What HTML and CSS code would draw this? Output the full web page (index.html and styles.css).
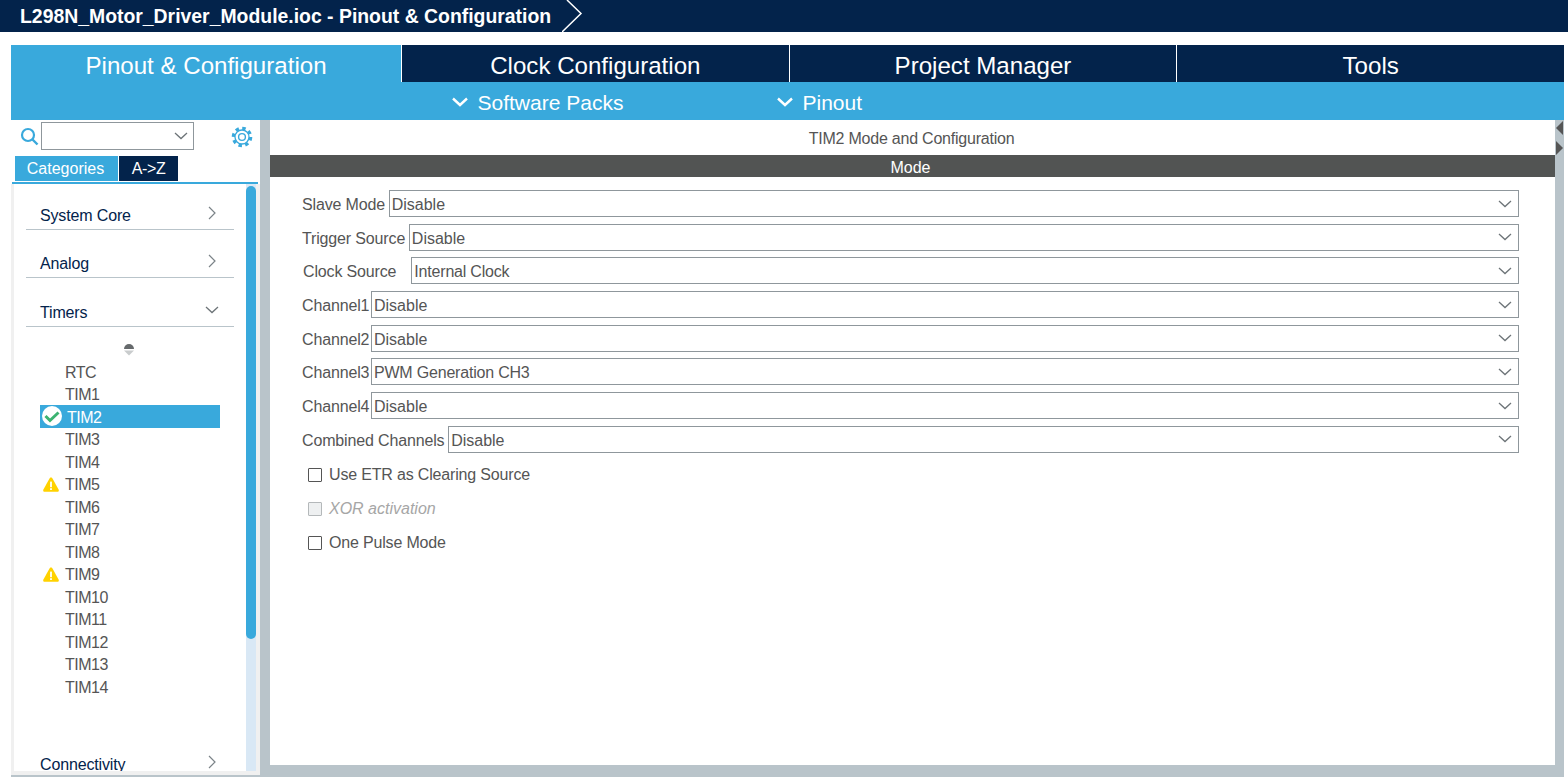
FILE: index.html
```html
<!DOCTYPE html>
<html>
<head>
    <title>L298N_Motor_Driver_Module.ioc - Pinout &amp; Configuration</title>
    <link rel="stylesheet" href="styles.css">
</head>
<body>
    <svg class="defs" width="0" height="0">
        <symbol id="chev-down" viewBox="0 0 14 8"><path d="M1 1 L7 6.5 L13 1" fill="none" stroke="#6d7478" stroke-width="1.3"/></symbol>
        <symbol id="chev-right" viewBox="0 0 8 14"><path d="M1 1 L7 7 L1 13" fill="none" stroke="#7b8388" stroke-width="1.2"/></symbol>
        <symbol id="warn" viewBox="0 0 16 15"><path d="M8 0.5 C8.8 0.5 9.2 1 9.6 1.7 L15.6 12.6 C16.2 13.8 15.6 14.8 14.3 14.8 L1.7 14.8 C0.4 14.8 -0.2 13.8 0.4 12.6 L6.4 1.7 C6.8 1 7.2 0.5 8 0.5 Z" fill="#ffd200"/><rect x="7.1" y="4.6" width="1.8" height="5.6" fill="#fff"/><rect x="7.1" y="11.2" width="1.8" height="1.8" fill="#fff"/></symbol>
    </svg>

    <div class="titlebar">
        <span class="title-text">L298N_Motor_Driver_Module.ioc - Pinout &amp; Configuration</span>
        <svg class="title-arrow" width="22" height="32" viewBox="0 0 22 32"><path d="M5 0 L19 13.5 L0 32" fill="none" stroke="#fff" stroke-width="1.5"/></svg>
    </div>

    <div class="tabs">
        <div class="tab active">Pinout &amp; Configuration</div>
        <div class="tab">Clock Configuration</div>
        <div class="tab">Project Manager</div>
        <div class="tab">Tools</div>
    </div>

    <div class="subbar">
        <div class="subitem subitem-packs">
            <svg width="16" height="10" viewBox="0 0 16 10"><path d="M1 1.5 L8 8 L15 1.5" fill="none" stroke="#fff" stroke-width="2.4"/></svg>
            <span>Software Packs</span>
        </div>
        <div class="subitem">
            <svg width="16" height="10" viewBox="0 0 16 10"><path d="M1 1.5 L8 8 L15 1.5" fill="none" stroke="#fff" stroke-width="2.4"/></svg>
            <span>Pinout</span>
        </div>
    </div>

    <div class="workspace">
        <div class="sidebar">
            <div class="side-head">
                <div class="search-row">
                    <svg class="search-icon" width="19" height="19" viewBox="0 0 19 19"><circle cx="8" cy="8" r="6" fill="none" stroke="#39a9dc" stroke-width="2.2"/><path d="M12.5 12.5 L17.5 17.5" stroke="#39a9dc" stroke-width="2.4"/></svg>
                    <div class="combo">
                        <svg width="14" height="8"><use href="#chev-down"/></svg>
                    </div>
                    <svg class="gear-icon" width="22" height="22" viewBox="0 0 22 22">
                        <circle cx="11" cy="11" r="8.6" fill="none" stroke="#39a9dc" stroke-width="3.4" stroke-dasharray="3.4 3.35"/>
                        <circle cx="11" cy="11" r="7" fill="#fff" stroke="#39a9dc" stroke-width="1.3"/>
                        <circle cx="11" cy="11" r="3.4" fill="none" stroke="#39a9dc" stroke-width="1.4"/>
                    </svg>
                </div>
                <div class="side-tabs">
                    <div class="side-tab on">Categories</div>
                    <div class="side-tab">A-&gt;Z</div>
                </div>
                <div class="side-line"></div>
            </div>
            <div class="side-body">
                <div class="tree">
                    <div class="cat"><span>System Core</span><svg width="8" height="14"><use href="#chev-right"/></svg></div>
                    <div class="cat"><span>Analog</span><svg width="8" height="14"><use href="#chev-right"/></svg></div>
                    <div class="cat"><span>Timers</span><svg class="cat-open" width="14" height="8"><use href="#chev-down"/></svg></div>

                    <div class="sort-icon">
                        <svg width="10" height="13" viewBox="0 0 10 13"><path d="M0 6 A5 5 0 0 1 10 6 Z" fill="#666a6c"/><path d="M0 7.5 H10 L5 12.5 Z" fill="#c9cccd"/></svg>
                    </div>

                    <div class="items">
                        <div class="item">RTC</div>
                        <div class="item">TIM1</div>
                        <div class="item selected">
                            <svg class="ok-icon" width="20" height="20" viewBox="0 0 20 20"><circle cx="10" cy="10" r="10" fill="#fff"/><path d="M3.5 10 L8 14.5 L16.5 6.5" fill="none" stroke="#3cb371" stroke-width="3"/></svg>
                            TIM2
                        </div>
                        <div class="item">TIM3</div>
                        <div class="item">TIM4</div>
                        <div class="item"><svg class="warn-icon" width="16" height="15"><use href="#warn"/></svg>TIM5</div>
                        <div class="item">TIM6</div>
                        <div class="item">TIM7</div>
                        <div class="item">TIM8</div>
                        <div class="item"><svg class="warn-icon" width="16" height="15"><use href="#warn"/></svg>TIM9</div>
                        <div class="item">TIM10</div>
                        <div class="item">TIM11</div>
                        <div class="item">TIM12</div>
                        <div class="item">TIM13</div>
                        <div class="item">TIM14</div>
                    </div>

                    <div class="cat cat-last"><span>Connectivity</span><svg width="8" height="14"><use href="#chev-right"/></svg></div>
                </div>
                <div class="scroll"><div class="thumb"></div></div>
            </div>
        </div>

        <div class="main">
            <div class="main-title">TIM2 Mode and Configuration</div>
            <div class="mode-bar">Mode</div>
            <div class="form">
                <div class="row"><label>Slave Mode</label><div class="select"><span>Disable</span><svg width="14" height="8"><use href="#chev-down"/></svg></div></div>
                <div class="row"><label>Trigger Source</label><div class="select"><span>Disable</span><svg width="14" height="8"><use href="#chev-down"/></svg></div></div>
                <div class="row"><label class="label-wide">Clock Source</label><div class="select"><span class="tight">Internal Clock</span><svg width="14" height="8"><use href="#chev-down"/></svg></div></div>
                <div class="row"><label class="label-ch">Channel1</label><div class="select"><span>Disable</span><svg width="14" height="8"><use href="#chev-down"/></svg></div></div>
                <div class="row"><label class="label-ch">Channel2</label><div class="select"><span>Disable</span><svg width="14" height="8"><use href="#chev-down"/></svg></div></div>
                <div class="row"><label class="label-ch">Channel3</label><div class="select"><span class="tight">PWM Generation CH3</span><svg width="14" height="8"><use href="#chev-down"/></svg></div></div>
                <div class="row"><label class="label-ch">Channel4</label><div class="select"><span>Disable</span><svg width="14" height="8"><use href="#chev-down"/></svg></div></div>
                <div class="row"><label>Combined Channels</label><div class="select"><span>Disable</span><svg width="14" height="8"><use href="#chev-down"/></svg></div></div>
            </div>
            <div class="checks">
                <div class="check"><span class="box"></span>Use ETR as Clearing Source</div>
                <div class="check disabled"><span class="box"></span>XOR activation</div>
                <div class="check"><span class="box"></span>One Pulse Mode</div>
            </div>
        </div>

        <div class="splitter">
            <svg width="9" height="16" viewBox="0 0 9 16"><path d="M8 0 V14 L1 7 Z" fill="#555"/></svg>
            <svg width="9" height="16" viewBox="0 0 9 16"><path d="M1 0 V14 L8 7 Z" fill="#555"/></svg>
        </div>
    </div>
</body>
</html>
```

FILE: styles.css
```css
body {
    margin: 0;
    background-color: #fff;
    font-family: "Liberation Sans", Arial, sans-serif;
    font-size: 16px;
    color: #555;
    overflow: hidden;
}

.defs {
    position: absolute;
}

.titlebar {
    height: 32px;
    background-color: #03234b;
    display: flex;
    align-items: center;
    color: #fff;
    font-weight: bold;
    font-size: 19.4px;
    padding-left: 20px;
}

.title-arrow {
    margin-left: 11px;
}

.tabs {
    display: flex;
    height: 37px;
    margin: 13px 4px 0 11px;
    background-color: #03234b;
}

.tab {
    flex: 1;
    text-align: center;
    line-height: 41px;
    font-size: 24.1px;
    color: #fff;
    border-left: 1px solid #fff;
}

.tab.active {
    flex: none;
    width: 390px;
    background-color: #39a9dc;
    border-left: none;
}

.subbar {
    height: 38px;
    box-sizing: border-box;
    margin: 0 4px 0 11px;
    padding: 4px 0 0 441px;
    display: flex;
    align-items: center;
    background-color: #39a9dc;
    color: #fff;
    font-size: 21px;
}

.subitem {
    display: flex;
    align-items: center;
    gap: 9.5px;
}

.subitem svg {
    margin-top: -3px;
}

.subitem-packs {
    width: 325px;
}

.workspace {
    display: flex;
    height: 657px;
    margin: 0 4px 0 11px;
    background-color: #b9c4ca;
}

.sidebar {
    width: 249px;
    height: 655px;
    box-sizing: border-box;
    padding: 0 4px 4px 0;
    background-color: #f0f0f0;
    display: flex;
    flex-direction: column;
}

.side-head {
    height: 64px;
    background-color: #fff;
    margin-right: -4px;
}

.search-row {
    display: flex;
    height: 36px;
    padding: 2px 0 0 9px;
    box-sizing: border-box;
}

.search-icon {
    margin: 5px 2px 0 0;
}

.combo {
    width: 146px;
    height: 26px;
    border: 1px solid #8f979c;
    display: flex;
    align-items: center;
    justify-content: flex-end;
    padding-right: 5px;
}

.gear-icon {
    margin: 4px 0 0 37px;
}

.side-tabs {
    display: flex;
    height: 25px;
    margin-left: 4px;
    gap: 1px;
}

.side-tab {
    width: 59px;
    background-color: #03234b;
    color: #fff;
    line-height: 25px;
    text-align: center;
    white-space: nowrap;
    letter-spacing: -0.4px;
}

.side-tab.on {
    background-color: #39a9dc;
    width: 101px;
    padding-right: 2px;
    letter-spacing: 0;
}

.side-line {
    height: 2px;
    margin: 1px 2px 0 1px;
    background-color: #39a9dc;
}

.side-body {
    flex: 1;
    display: flex;
    min-height: 0;
    padding-left: 3px;
}

.tree {
    flex: 1;
    background-color: #fff;
    overflow: hidden;
    padding: 0 12px;
}

.cat {
    height: 44.5px;
    margin-bottom: 3px;
    border-bottom: 1px solid #b9c4ca;
    color: #03234b;
    letter-spacing: -0.15px;
    display: flex;
    justify-content: space-between;
    align-items: flex-end;
    padding: 0 18px 0 14px;
    line-height: 27px;
}

.cat svg {
    margin-bottom: 9px;
}

.cat .cat-open {
    margin: 0 -3px 12px 0;
}

.cat-last {
    border-bottom: none;
    margin-top: 34px;
}

.sort-icon {
    height: 20px;
    margin-top: 15px;
    padding-left: 98px;
}

.item {
    height: 22.5px;
    line-height: 22.5px;
    padding-left: 39px;
    letter-spacing: -0.5px;
    position: relative;
}

.item.selected {
    margin: -1.5px 14px 1.5px;
    padding-left: 27px;
    line-height: 25.5px;
    background-color: #39a9dc;
    color: #fff;
}

.ok-icon {
    position: absolute;
    left: 2px;
    top: 1px;
}

.warn-icon {
    position: absolute;
    left: 17px;
    top: 3px;
}

.scroll {
    width: 10px;
    background-color: #d9e8f5;
}

.thumb {
    height: 453px;
    margin-top: 2px;
    background-color: #39a9dc;
    border-radius: 5px;
}

.main {
    width: 1285px;
    height: 645px;
    margin-left: 10px;
    background-color: #fff;
}

.main-title {
    height: 35px;
    line-height: 37px;
    padding-right: 2px;
    letter-spacing: -0.22px;
    text-align: center;
}

.mode-bar {
    height: 22px;
    line-height: 25px;
    padding-right: 4px;
    text-align: center;
    color: #fff;
    background-color: #525453;
}

.form {
    display: flex;
    flex-direction: column;
    gap: 6.7px;
    padding: 13px 36px 0 32px;
}

.row {
    display: flex;
    align-items: center;
    height: 27px;
}

.row label {
    margin: 3px 3.7px 0 0;
    letter-spacing: -0.15px;
}

.row .label-wide {
    margin: 3px 15px 0 1px;
}

.row .label-ch {
    margin-right: 1.7px;
}

.select {
    flex: 1;
    height: 25px;
    border: 1px solid #8f979c;
    display: flex;
    align-items: center;
    justify-content: space-between;
    padding: 0 6px 0 2px;
}

.select span {
    margin-top: 3px;
}

.select .tight {
    letter-spacing: -0.2px;
}

.checks {
    padding: 12px 0 0 38px;
    display: flex;
    flex-direction: column;
    gap: 14px;
}

.check {
    display: flex;
    align-items: center;
    height: 20px;
    gap: 7px;
    letter-spacing: -0.17px;
}

.box {
    width: 12px;
    height: 12px;
    border: 1.5px solid #555;
    border-radius: 1px;
}

.disabled {
    color: #a6a6a6;
    font-style: italic;
    letter-spacing: 0;
}

.disabled .box {
    border-color: #b4b8ba;
    background-color: #eef0f1;
}

.splitter {
    display: flex;
    flex-direction: column;
    align-items: flex-end;
    gap: 4px;
    flex: 1;
    padding-top: 1px;
}
```
